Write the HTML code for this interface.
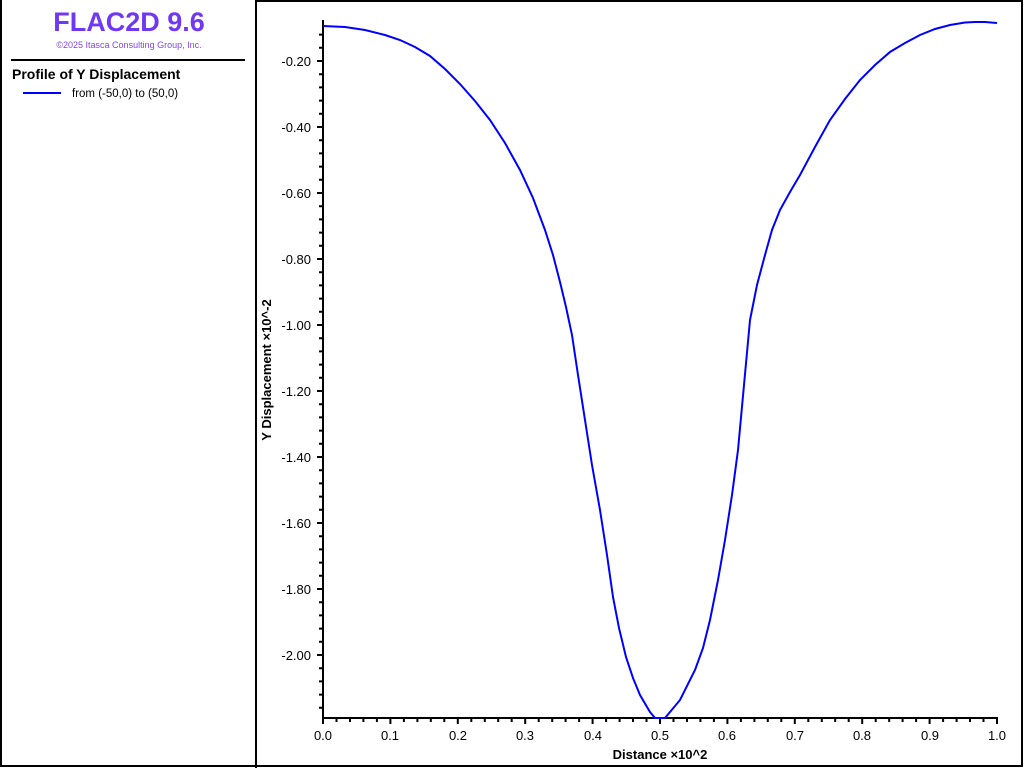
<!DOCTYPE html>
<html><head><meta charset="utf-8"><style>
html,body{margin:0;padding:0;background:#fff;width:1024px;height:768px;overflow:hidden}
svg{display:block;font-family:"Liberation Sans",sans-serif}
</style></head><body>
<svg width="1024" height="768" viewBox="0 0 1024 768">
<rect x="1" y="1" width="1021" height="765" fill="#fff" stroke="#000" stroke-width="2"/>
<line x1="2" y1="1" x2="255" y2="1" stroke="#fff" stroke-width="2"/>
<line x1="256" y1="0" x2="256" y2="768" stroke="#000" stroke-width="2"/>
<text x="129" y="31" text-anchor="middle" font-size="27" font-weight="bold" fill="#7038f4">FLAC2D 9.6</text>
<text x="129" y="48" text-anchor="middle" font-size="9" fill="#8044f0">©2025 Itasca Consulting Group, Inc.</text>
<line x1="11" y1="60" x2="245" y2="60" stroke="#000" stroke-width="2"/>
<text x="12" y="79" font-size="14" font-weight="bold">Profile of Y Displacement</text>
<line x1="23" y1="93" x2="61" y2="93" stroke="#0000ff" stroke-width="2"/>
<text x="72" y="97" font-size="11.5">from (-50,0) to (50,0)</text>
<path id="ticks" d="" stroke="#000" stroke-width="2" fill="none"/>
<line x1="323" y1="20" x2="323" y2="719" stroke="#000" stroke-width="2"/>
<line x1="322" y1="718" x2="998" y2="718" stroke="#000" stroke-width="2"/>
<g font-size="13" text-anchor="end">
<text x="311" y="66">-0.20</text><text x="311" y="132">-0.40</text><text x="311" y="198">-0.60</text>
<text x="311" y="264">-0.80</text><text x="311" y="330">-1.00</text><text x="311" y="396">-1.20</text>
<text x="311" y="462">-1.40</text><text x="311" y="528">-1.60</text><text x="311" y="594">-1.80</text>
<text x="311" y="660">-2.00</text>
</g>
<g font-size="13" text-anchor="middle">
<text x="323" y="740">0.0</text><text x="390" y="740">0.1</text><text x="458" y="740">0.2</text>
<text x="525" y="740">0.3</text><text x="593" y="740">0.4</text><text x="660" y="740">0.5</text>
<text x="727" y="740">0.6</text><text x="795" y="740">0.7</text><text x="862" y="740">0.8</text>
<text x="930" y="740">0.9</text><text x="997" y="740">1.0</text>
</g>
<text x="660" y="759" text-anchor="middle" font-size="13" font-weight="bold">Distance ×10^2</text>
<text transform="translate(271,370) rotate(-90)" text-anchor="middle" font-size="13" font-weight="bold">Y Displacement ×10^-2</text>
<polyline fill="none" stroke="#0000ff" stroke-width="2" points="323,26 345,27 365,30 385,35 400,40 415,47 430,56 445,69 460,84 475,101 490,120 505,143 520,170 533,198 545,230 553,255 560,282 566,307 572,335 578,375 585,420 592,465 600,510 607,555 613,597 619,628 626,657 633,678 640,695 650,712 655,718 665,718 680,700 695,670 703,648 710,620 718,580 725,540 732,495 738,450 744,385 750,320 757,285 765,255 772,230 780,210 790,192 800,175 815,147 830,120 845,99 860,80 875,65 890,52 905,43 920,35 935,29 950,25 965,22.5 975,22 985,22 997,23"/>
</svg>
<script>
var d="";
for(var i=0;i<=52;i++){var y=61+i*13.2;if(y>718)break;var maj=(i%5==0);d+="M"+(maj?317:319)+" "+y.toFixed(1)+"H323";}
var y=61-13.2;d+="M319 "+y.toFixed(1)+"H323";y-=13.2;d+="M319 "+y.toFixed(1)+"H323";
for(var i=0;i<=50;i++){var x=323+i*13.48;var maj=(i%5==0);d+="M"+x.toFixed(1)+" 718V"+(maj?724:722);}
document.getElementById("ticks").setAttribute("d",d);
</script>
</body></html>
